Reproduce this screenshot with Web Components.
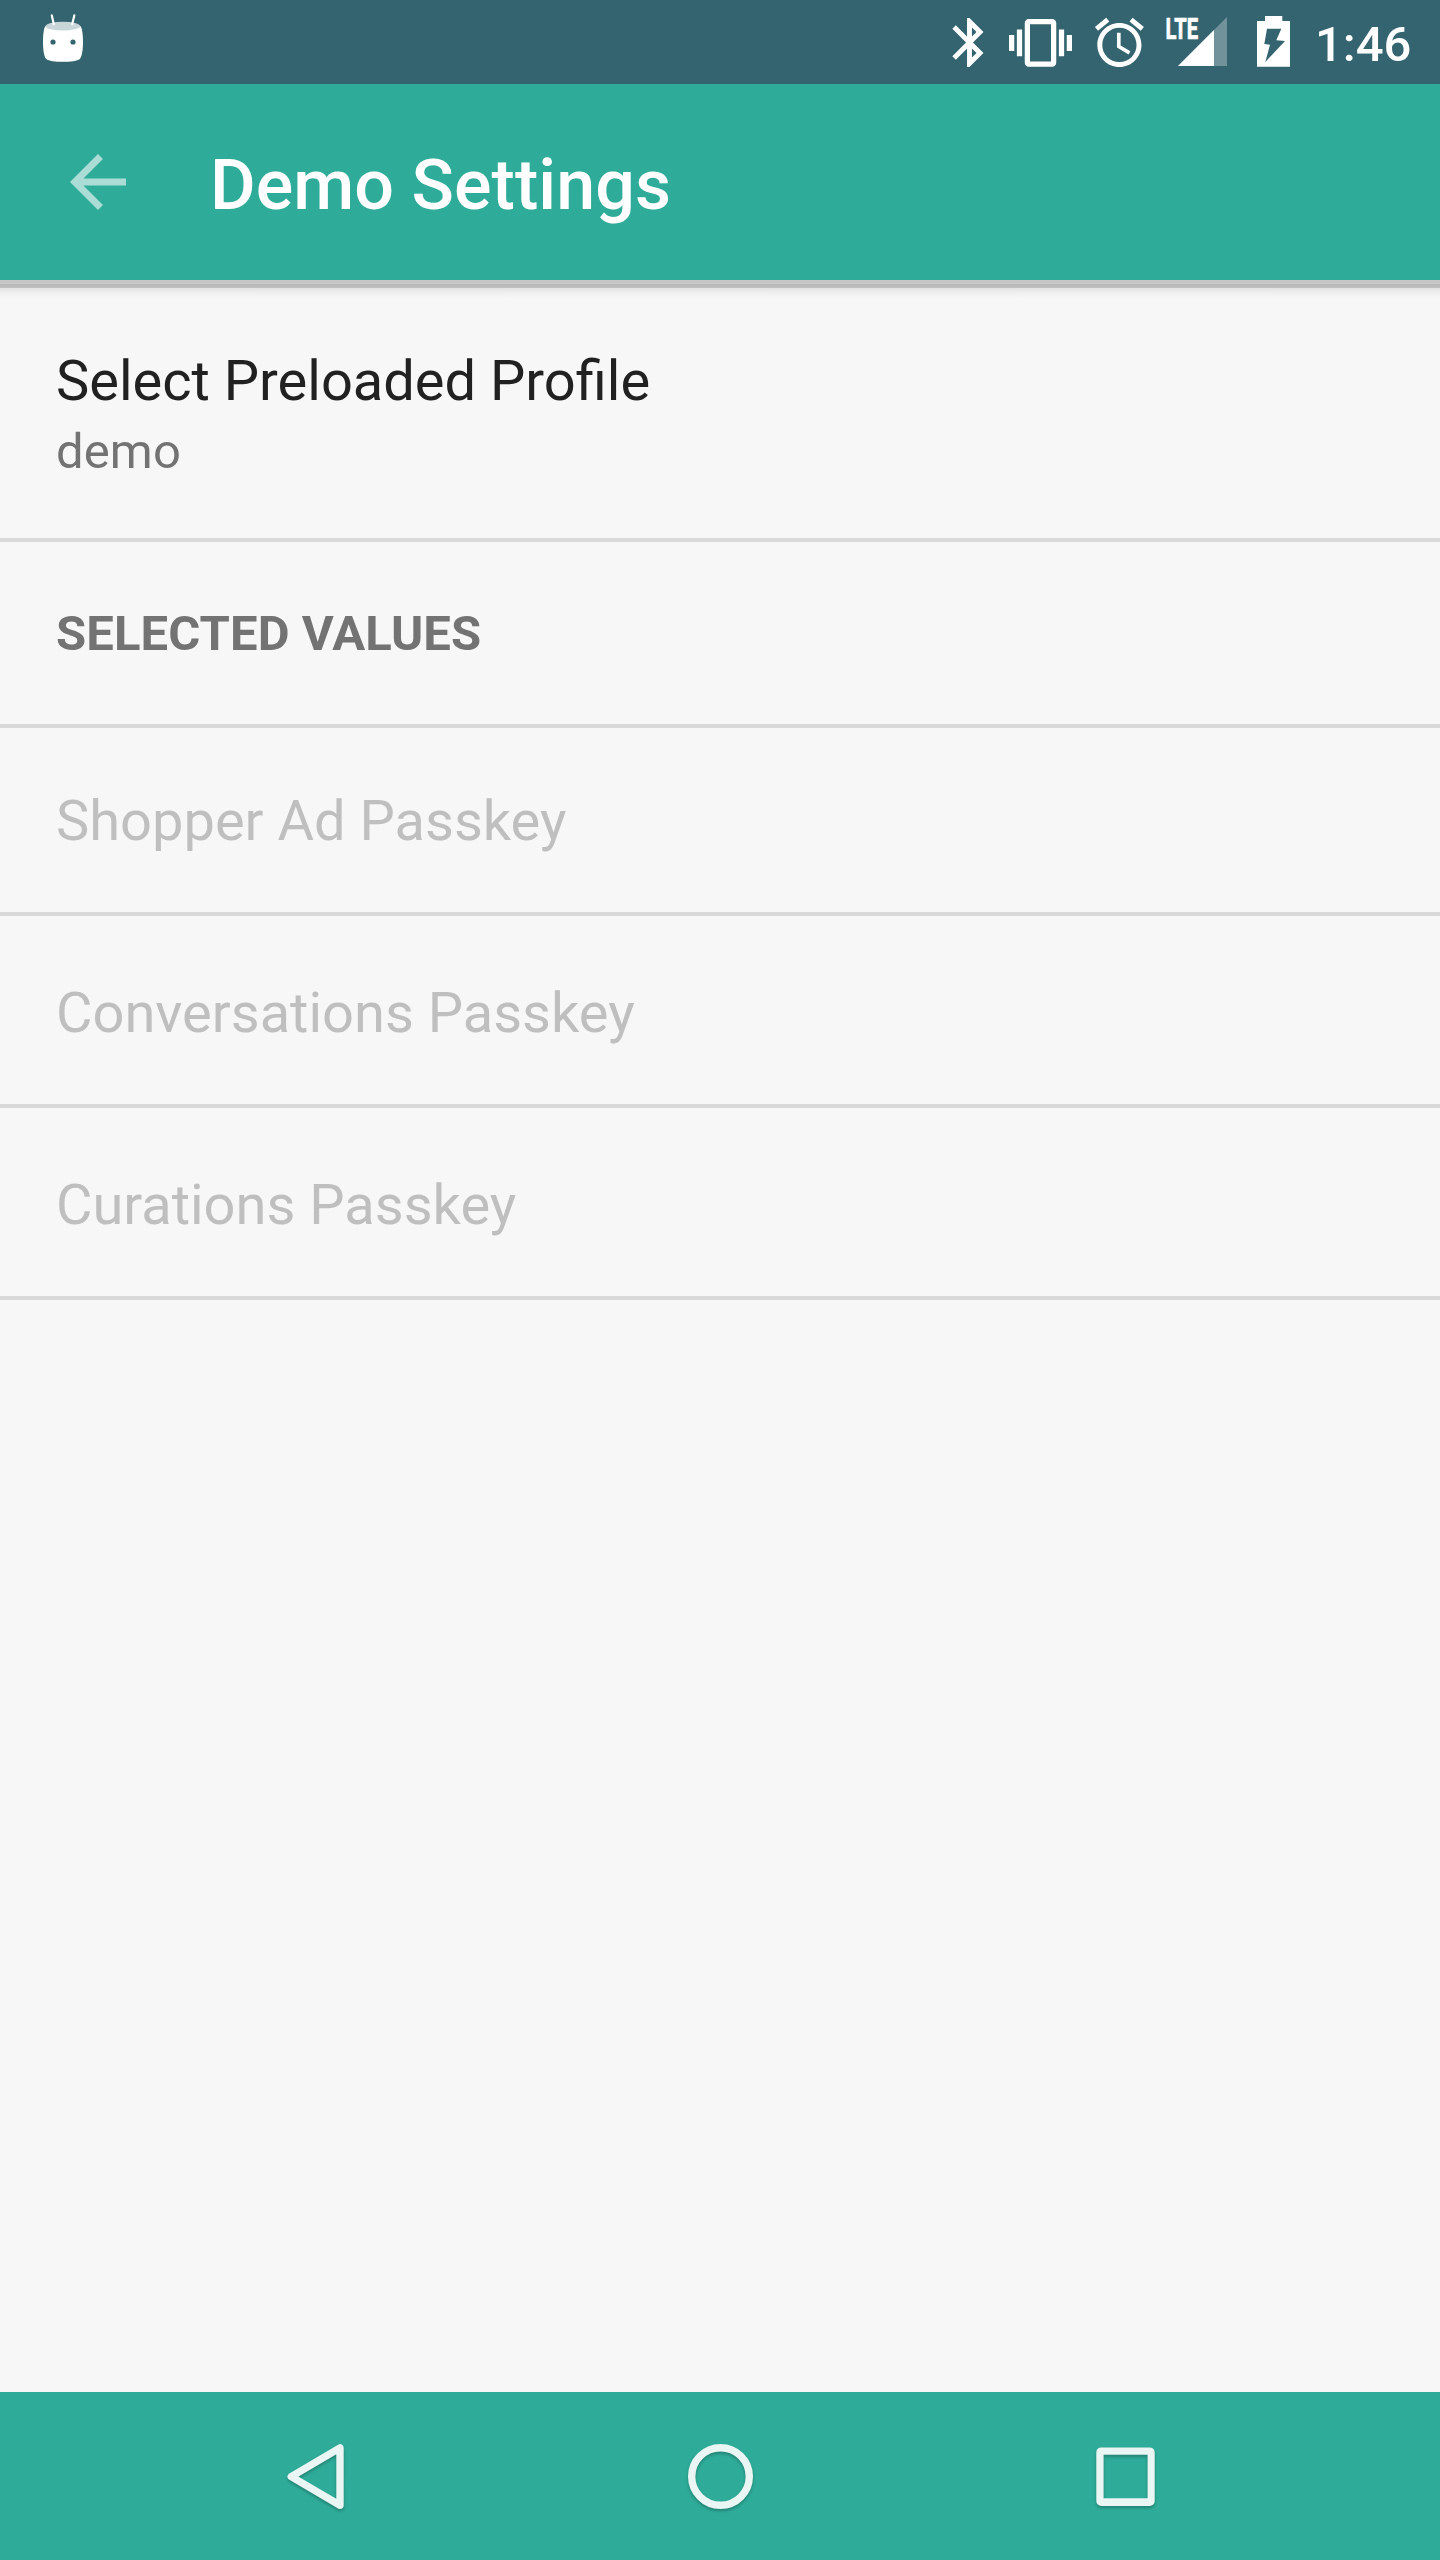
<!DOCTYPE html>
<html lang="en">
<head>
<meta charset="utf-8">
<title>Demo Settings</title>
<style>
  html, body { margin: 0; height: 100%; }
  body { font-family: Roboto, "Noto Sans", sans-serif; background: #f7f7f7; }
</style>
</head>
<body>
<settings-screen></settings-screen>
<script>
const define = (name, html) => {
  const template = document.createElement('template');
  template.innerHTML = html;
  customElements.define(name, class extends HTMLElement {
    constructor() {
      super();
      this.attachShadow({ mode: 'open' }).append(template.content.cloneNode(true));
    }
  });
};

define('status-bar', `
<style>
  :host { display: flex; height: 84px; background: #34646f; color: #fff; }
  svg { display: block; flex: none; fill: #fff; }
  .gap { flex: 1; }
  .time { width: 126px; font-size: 49px; font-weight: 500; line-height: 58px; padding: 16px 0 0 1px; white-space: nowrap; box-sizing: border-box; }
</style>
<svg width="126" height="84" viewBox="0 0 126 84">
  <path d="M45.5 26C43.6 28 43 36 43 42C43 50 44 57 46.5 59.2C50 62.6 76 62.6 79.5 59.2C82 57 83 50 83 42C83 36 82.4 28 80.3 26Z"/>
  <ellipse cx="62.9" cy="26.2" rx="17.2" ry="4.4" fill="#c9d6d9"/>
  <path d="M51.8 15.4L53.8 24.2M74.3 15.4L72.2 24.2" stroke="#fff" stroke-width="2.2" stroke-linecap="round"/>
  <circle cx="53" cy="42" r="2.6" fill="#34646f"/><circle cx="73" cy="42" r="2.6" fill="#34646f"/>
</svg>
<span class="gap"></span>
<svg width="60" height="84" viewBox="940 0 60 84"><path transform="translate(940.1 13.1) scale(2.45)" d="M17.71 7.71L12 2h-1v7.59L6.41 5 5 6.41 10.59 12 5 17.59 6.41 19 11 14.41V22h1l5.71-5.71-4.3-4.29 4.3-4.29zM13 5.83l1.88 1.88L13 9.59V5.83zm1.88 10.46L13 18.17v-3.76l1.88 1.88z"/></svg>
<svg width="85" height="84" viewBox="1000 0 85 84"><path transform="translate(1009 11) scale(2.625 2.66)" d="M0 15h2V9H0v6zm3 2h2V7H3v10zm19-8v6h2V9h-2zm-3 8h2V7h-2v10zM16.5 3h-9C6.67 3 6 3.67 6 4.5v15c0 .83.67 1.5 1.5 1.5h9c.83 0 1.5-.67 1.5-1.5v-15c0-.83-.67-1.5-1.5-1.5zM16 19H8V5h8v14z"/></svg>
<svg width="70" height="84" viewBox="1085 0 70 84"><path transform="translate(1090 13.1) scale(2.45)" d="M22 5.72l-4.6-3.86-1.29 1.53 4.6 3.86L22 5.72zM7.88 3.39L6.6 1.86 2 5.71l1.29 1.53 4.59-3.85zM12.5 8H11v6l4.75 2.85.75-1.23-4-2.37V8zM12 4c-4.97 0-9 4.03-9 9s4.02 9 9 9c4.97 0 9-4.03 9-9s-4.03-9-9-9zm0 16c-3.87 0-7-3.13-7-7s3.13-7 7-7 7 3.13 7 7-3.13 7-7 7z"/></svg>
<svg width="90" height="84" viewBox="1155 0 90 84">
  <path d="M1178 66L1227 17V66Z" fill-opacity=".3"/>
  <path d="M1178 66L1214 30V66Z"/>
  <text x="1165.6" y="39" font-size="29.5" font-weight="700" stroke="#fff" stroke-width=".7" textLength="32.6" lengthAdjust="spacingAndGlyphs">LTE</text>
</svg>
<svg width="69" height="84" viewBox="1245 0 69 84">
  <path fill-rule="evenodd" d="M1265 16H1282.3V21H1290V66.7H1257V21H1265ZM1267 28.7L1264.3 44L1270 44.7L1265.3 62L1285 41L1276.3 40.3L1281.3 28.7Z"/>
</svg>
<span class="time">1:46</span>
`);

define('app-bar', `
<style>
  :host { display: flex; height: 196px; box-sizing: border-box; padding: 0 56px; background: #2eac99; color: #fff; position: relative; }
  svg { display: block; flex: none; margin: 56px 70px 0 0; fill: #fff; opacity: .6; }
  h1 { margin: 60px 0 0; font-size: 70px; font-weight: 500; line-height: 82px; letter-spacing: .06px; white-space: nowrap; }
  .shadow { position: absolute; left: 0; right: 0; top: 196px; height: 20px;
    background: linear-gradient(#c5c5c5 0 2px, #cacaca 4px, #b8b8b8 4px, #c0c0c0 8px, #e2e2e2 8px, #ededed 12px, #f4f4f4 16px, #f7f7f7 20px); }
</style>
<svg width="84" height="84" viewBox="0 0 24 24"><path d="M20 11H7.83l5.59-5.59L12 4l-8 8 8 8 1.41-1.41L7.83 13H20v-2z"/></svg>
<h1><slot></slot></h1>
<div class="shadow"></div>
`);

define('settings-list', `
<style>
  :host { display: flex; flex-direction: column; flex: 1; }
</style>
<slot></slot>
`);

define('pref-item', `
<style>
  :host { display: flex; flex-direction: column; gap: 9px; box-sizing: border-box; height: 192px;
    padding: 64px 56px 0; border-bottom: 4px solid #d9d9d9; font-size: 56px; line-height: 66px; color: #212121; white-space: nowrap; }
  :host([disabled]) { color: #bfbfbf; }
  :host([first]) { height: 262px; padding-top: 68px; }
  :host([compact]) { height: 188px; padding-top: 60px; }
  ::slotted([slot=summary]) { font-size: 49px; line-height: 58px; letter-spacing: .1px; color: #737373; }
</style>
<div><slot></slot></div>
<slot name="summary"></slot>
`);

define('pref-category', `
<style>
  :host { display: block; box-sizing: border-box; height: 186px; padding: 63px 56px 0; border-bottom: 4px solid #d9d9d9;
    font-size: 49px; font-weight: 700; line-height: 58px; letter-spacing: .08px; color: #737373; white-space: nowrap; }
</style>
<slot></slot>
`);

define('nav-bar', `
<style>
  :host { display: flex; justify-content: space-between; padding: 0 262px; height: 168px; background: #2eac99; }
  svg { display: block; fill: none; stroke: #e9f6f4; stroke-width: 7.4; filter: drop-shadow(0 2px 1.5px rgba(0,0,0,.25)); }
</style>
<svg width="106" height="168" viewBox="262 2392 106 168"><path stroke-linejoin="round" d="M291.2 2476.6L340 2447.9V2505.2Z"/></svg>
<svg width="106" height="168" viewBox="667 2392 106 168"><circle cx="720.5" cy="2476.5" r="28.8"/></svg>
<svg width="106" height="168" viewBox="1072 2392 106 168"><path fill="#e9f6f4" stroke="none" fill-rule="evenodd" d="M1101.3 2447.4H1149.7A5 5 0 0 1 1154.7 2452.4V2501A5 5 0 0 1 1149.7 2506H1101.3A5 5 0 0 1 1096.3 2501V2452.4A5 5 0 0 1 1101.3 2447.4ZM1103.6 2454.7V2498.3H1147.6V2454.7Z"/></svg>
`);

define('settings-screen', `
<style>
  :host { display: flex; flex-direction: column; width: 1440px; height: 2560px; background: #f7f7f7; overflow: hidden; }
</style>
<status-bar></status-bar>
<app-bar>Demo Settings</app-bar>
<settings-list>
  <pref-item first>Select Preloaded Profile<span slot="summary">demo</span></pref-item>
  <pref-category>SELECTED VALUES</pref-category>
  <pref-item disabled compact>Shopper Ad Passkey</pref-item>
  <pref-item disabled>Conversations Passkey</pref-item>
  <pref-item disabled>Curations Passkey</pref-item>
</settings-list>
<nav-bar></nav-bar>
`);
</script>
</body>
</html>
